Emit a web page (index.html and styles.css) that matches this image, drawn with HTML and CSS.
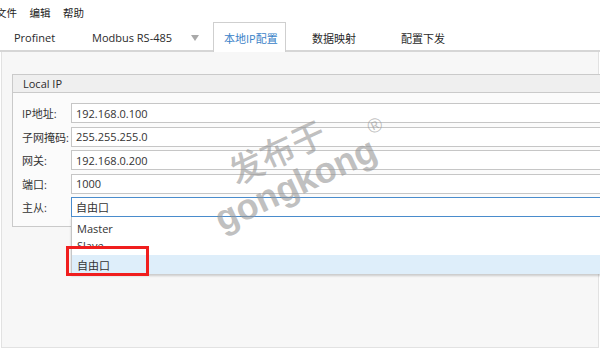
FILE: index.html
```html
<!DOCTYPE html>
<html lang="zh">
<head>
<meta charset="utf-8">
<title>本地IP配置</title>
<link rel="stylesheet" href="styles.css">
</head>
<body>
<div class="app">
  <div class="menubar">
    <span class="menu-item">文件</span>
    <span class="menu-item">编辑</span>
    <span class="menu-item">帮助</span>
  </div>
  <div class="tabbar">
    <div class="tab tab-profinet">Profinet</div>
    <div class="tab tab-modbus">Modbus RS-485<span class="tri"></span></div>
    <div class="tab tab-active">本地IP配置</div>
    <div class="tab tab-wide">数据映射</div>
    <div class="tab tab-wide">配置下发</div>
  </div>
  <div class="panel">
    <div class="group">
      <div class="group-head">Local IP</div>
      <div class="group-body">
        <div class="row"><span class="label">IP地址:</span><div class="field">192.168.0.100</div></div>
        <div class="row"><span class="label">子网掩码:</span><div class="field">255.255.255.0</div></div>
        <div class="row"><span class="label">网关:</span><div class="field">192.168.0.200</div></div>
        <div class="row"><span class="label">端口:</span><div class="field">1000</div></div>
        <div class="row"><span class="label">主从:</span>
          <div class="field combo">自由口
            <div class="dropdown">
              <div class="opt">Master</div>
              <div class="opt opt-clip"><span class="opt-text">Slave</span></div>
              <div class="opt opt-sel">自由口</div>
            </div>
          </div>
        </div>
      </div>
    </div>
  </div>
  <div class="annot"></div>
  <div class="watermark">
    <div class="wm-line wm-cn">发布于</div>
    <div class="wm-line wm-en">gongkong<span class="wm-reg">®</span></div>
  </div>
</div>
</body>
</html>
```

FILE: styles.css
```css
* { box-sizing: border-box; }
html, body { margin: 0; padding: 0; }
body {
  width: 600px;
  height: 349px;
  overflow: hidden;
  background: #ffffff;
  font-family: "Open Sans", "Noto Sans CJK SC", sans-serif;
  font-size: 11px;
  color: #2b2b2b;
}
.app {
  position: relative;
  width: 600px;
  height: 349px;
  overflow: hidden;
  display: flex;
  flex-direction: column;
}
.menubar {
  height: 22px;
  display: flex;
  align-items: center;
  gap: 12.5px;
  margin-left: -4px;
  padding-top: 3px;
  font-size: 10.5px;
  color: #222;
}
.tabbar {
  height: 30px;
  display: flex;
  border-bottom: 2px solid #d6d6d6;
  font-size: 11px;
  color: #2a2a2a;
}
.tab {
  height: 28px;
  display: flex;
  align-items: center;
  padding-top: 3px;
  white-space: nowrap;
  flex: none;
}
.tab-profinet { width: 80px; padding-left: 14px; }
.tab-modbus { width: 133px; padding-left: 12px; }
.tri {
  margin-left: auto;
  margin-right: 14px;
  width: 0;
  height: 0;
  border-left: 4px solid transparent;
  border-right: 4px solid transparent;
  border-top: 6px solid #a9a9a9;
}
.tab-active {
  width: 73px;
  height: 30px;
  margin-bottom: -2px;
  padding-left: 10px;
  padding-bottom: 2px;
  background: #ffffff;
  border: 1px solid #cfcfcf;
  border-bottom: none;
  color: #3a82c8;
  position: relative;
  z-index: 1;
}
.tab-wide { width: 89px; padding-left: 26px; }
.panel {
  flex: 1;
  background: #f7f7f7;
  border: 1px solid #e2e2e2;
  border-top: none;
  margin: 0 1px 1px 1px;
  padding: 22px 0 0 10px;
}
.group {
  width: 700px;
  border: 1px solid #cacaca;
  border-right: none;
  background: #fbfbfb;
}
.group-head {
  height: 18px;
  background: #efefef;
  border-bottom: 1px solid #cacaca;
  padding-left: 10px;
  display: flex;
  align-items: center;
  font-size: 11px;
  color: #2b2b2b;
}
.group-body {
  padding: 10px 0 9px 9px;
  display: flex;
  flex-direction: column;
  gap: 3.5px;
}
.row {
  display: flex;
  align-items: center;
  height: 20px;
}
.label {
  width: 49px;
  flex: none;
  font-size: 11px;
  color: #333;
  white-space: nowrap;
}
.field {
  flex: 1;
  height: 20px;
  background: #ffffff;
  border: 1px solid #c6c6c6;
  border-right: none;
  padding-left: 4px;
  display: flex;
  align-items: center;
  font-size: 11px;
  color: #333;
}
.combo {
  position: relative;
  border-color: #4a8ccc;
}
.dropdown {
  position: absolute;
  left: -1px;
  top: 19px;
  width: 560px;
  background: #ffffff;
  border-left: 1px solid #c6c6c6;
  padding-top: 2px;
  box-shadow: 0 2px 2px rgba(0,0,0,0.18);
  z-index: 5;
}
.opt {
  height: 19px;
  padding-left: 5px;
  display: flex;
  align-items: center;
  font-size: 11px;
  color: #333;
}
.opt-clip {
  height: 17px;
  align-items: flex-start;
}
.opt-text {
  display: block;
  height: 9px;
  overflow: hidden;
  line-height: 16px;
}
.opt-sel {
  background: #deeefa;
}
.annot {
  position: absolute;
  left: 66px;
  top: 246px;
  width: 83px;
  height: 30px;
  border: 3px solid #f01e1e;
  z-index: 10;
}
.watermark {
  position: absolute;
  left: 188px;
  top: 132px;
  width: 200px;
  transform: rotate(-25deg);
  transform-origin: center;
  color: rgba(150,150,150,0.6);
  font-family: "Liberation Sans", "Noto Sans CJK SC", sans-serif;
  font-weight: bold;
  z-index: 20;
  text-align: center;
  pointer-events: none;
}
.wm-line { white-space: nowrap; }
.wm-cn {
  font-size: 34px;
  line-height: 36px;
  font-weight: 500;
  margin-left: -6px;
}
.wm-en {
  font-size: 36px;
  line-height: 36px;
  position: relative;
}
.wm-reg {
  position: absolute;
  font-size: 20px;
  font-weight: normal;
  top: -20px;
  right: -4px;
}
```
